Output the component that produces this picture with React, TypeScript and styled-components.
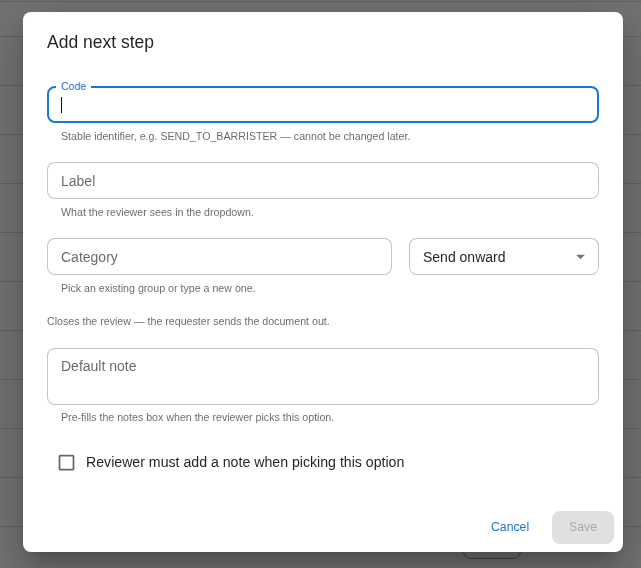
import React from "react";
import styled, { createGlobalStyle } from "styled-components";

const Global = createGlobalStyle`
  html, body { margin: 0; padding: 0; }
  body { font-family: "Liberation Sans", Arial, Helvetica, sans-serif; }
  *, *::before, *::after { box-sizing: border-box; }
`;

const Page = styled.div`
  height: 568px;
  overflow: hidden;
  background: #e4e4e4;
  padding-top: 1px;
`;

const BgRow = styled.div<{ $h: number }>`
  height: ${(p) => p.$h}px;
  border-top: 1px solid #c2c2c2;
  display: flex;
  justify-content: flex-end;
  padding-right: 120px;
`;

const BgButton = styled.div`
  width: 58px;
  height: 32px;
  border: 1px solid #888;
  border-radius: 8px;
`;

const Overlay = styled.div`
  position: fixed;
  inset: 0;
  background: rgba(0, 0, 0, 0.5);
  display: flex;
  align-items: flex-start;
  padding: 12px 0 0 23px;
`;

const Dialog = styled.div`
  width: 600px;
  background: #fff;
  border-radius: 8px;
  display: flex;
  flex-direction: column;
  box-shadow: 0px 11px 15px -7px rgba(0, 0, 0, 0.2),
    0px 24px 38px 3px rgba(0, 0, 0, 0.14), 0px 9px 46px 8px rgba(0, 0, 0, 0.12);
`;

const Title = styled.h2`
  margin: 0;
  padding: 16px 24px 0;
  font-size: 17.5px;
  font-weight: 500;
  line-height: 28px;
  color: rgba(0, 0, 0, 0.87);
`;

const Content = styled.div`
  padding: 30px 24px 21px;
  display: flex;
  flex-direction: column;
  gap: 16px;
`;

const FieldGroup = styled.div`
  display: flex;
  flex-direction: column;
  min-width: 0;
`;

const Outline = styled.div<{ $focused?: boolean }>`
  position: relative;
  display: flex;
  align-items: flex-start;
  border: ${(p) =>
    p.$focused ? "2px solid #1976d2" : "1px solid rgba(0, 0, 0, 0.23)"};
  border-radius: 8px;
  padding: ${(p) => (p.$focused ? "6.5px 12px" : "7.5px 13px")};
  background: #fff;
`;

const FloatLabel = styled.span`
  position: absolute;
  top: -8px;
  left: 7px;
  padding: 0 5px;
  background: #fff;
  font-size: 10.5px;
  line-height: 12px;
  color: #1976d2;
`;

const FakeInput = styled.div`
  height: 20.125px;
  display: flex;
  align-items: center;
`;

const Caret = styled.span`
  display: block;
  width: 1px;
  height: 16px;
  background: #111;
`;

const Input = styled.input`
  border: none;
  outline: none;
  padding: 0;
  margin: 0;
  width: 100%;
  height: 20.125px;
  font: inherit;
  font-size: 14px;
  line-height: 20.125px;
  color: rgba(0, 0, 0, 0.87);
  background: transparent;
  &::placeholder {
    color: rgba(0, 0, 0, 0.6);
    opacity: 1;
  }
`;

const TextArea = styled.textarea`
  border: none;
  outline: none;
  padding: 0;
  margin: 0;
  width: 100%;
  height: 40.25px;
  resize: none;
  font: inherit;
  font-size: 14px;
  line-height: 20.125px;
  color: rgba(0, 0, 0, 0.87);
  background: transparent;
  overflow: hidden;
  &::placeholder {
    color: rgba(0, 0, 0, 0.6);
    opacity: 1;
  }
`;

const Helper = styled.p`
  margin: 4.5px 14px 1px;
  font-size: 10.65px;
  line-height: 17.43px;
  color: rgba(0, 0, 0, 0.6);
`;

const Note = styled.p`
  margin: -1px 0 1px;
  font-size: 10.65px;
  line-height: 17.43px;
  color: rgba(0, 0, 0, 0.6);
`;

const TwoCols = styled.div`
  display: grid;
  grid-template-columns: 1fr 190px;
  gap: 17px;
  align-items: start;
`;

const SelectValue = styled.span`
  font-size: 14px;
  line-height: 20.125px;
  color: rgba(0, 0, 0, 0.87);
`;

const SelectArrow = styled.svg`
  position: absolute;
  right: 7px;
  top: 50%;
  margin-top: -10.5px;
  width: 21px;
  height: 21px;
  fill: rgba(0, 0, 0, 0.54);
`;

const CheckRow = styled.label`
  display: flex;
  align-items: center;
  margin-top: -1px;
`;

const CheckBoxWrap = styled.span`
  display: flex;
  padding: 9px;
  svg {
    width: 21px;
    height: 21px;
    fill: rgba(0, 0, 0, 0.6);
  }
`;

const CheckText = styled.span`
  font-size: 14.15px;
  line-height: 1.5;
  color: rgba(0, 0, 0, 0.87);
`;

const Actions = styled.div`
  display: flex;
  justify-content: flex-end;
  align-items: center;
  gap: 14px;
  padding: 8px 9px 8px 8px;
`;

const BaseButton = styled.button`
  font-family: inherit;
  font-size: 12.25px;
  font-weight: 500;
  line-height: 1.75;
  border: none;
  border-radius: 8px;
  min-width: 56px;
  cursor: pointer;
`;

const TextButton = styled(BaseButton)`
  background: transparent;
  color: #1976d2;
  padding: 6px 8px;
`;

const SaveButton = styled(BaseButton)`
  background: rgba(0, 0, 0, 0.12);
  color: rgba(0, 0, 0, 0.26);
  padding: 6px 17px;
  cursor: default;
`;

const bgRows = Array.from({ length: 11 });

export default function App() {
  return (
    <>
      <Global />
      <Page>
        <BgRow $h={35} />
        {bgRows.map((_, i) => (
          <BgRow key={i} $h={49}>
            {i === bgRows.length - 1 && <BgButton />}
          </BgRow>
        ))}
      </Page>
      <Overlay>
        <Dialog role="dialog" aria-labelledby="dlg-title">
          <Title id="dlg-title">Add next step</Title>
          <Content>
            <FieldGroup>
              <Outline $focused>
                <FloatLabel>Code</FloatLabel>
                <FakeInput>
                  <Caret />
                </FakeInput>
              </Outline>
              <Helper>
                Stable identifier, e.g. SEND_TO_BARRISTER — cannot be changed
                later.
              </Helper>
            </FieldGroup>

            <FieldGroup>
              <Outline>
                <Input placeholder="Label" />
              </Outline>
              <Helper>What the reviewer sees in the dropdown.</Helper>
            </FieldGroup>

            <TwoCols>
              <FieldGroup>
                <Outline>
                  <Input placeholder="Category" />
                </Outline>
                <Helper>Pick an existing group or type a new one.</Helper>
              </FieldGroup>
              <Outline>
                <SelectValue>Send onward</SelectValue>
                <SelectArrow viewBox="0 0 24 24">
                  <path d="M7 10l5 5 5-5z" />
                </SelectArrow>
              </Outline>
            </TwoCols>

            <Note>Closes the review — the requester sends the document out.</Note>

            <FieldGroup>
              <Outline>
                <TextArea rows={2} placeholder="Default note" />
              </Outline>
              <Helper>Pre-fills the notes box when the reviewer picks this option.</Helper>
            </FieldGroup>

            <CheckRow>
              <CheckBoxWrap>
                <svg viewBox="0 0 24 24">
                  <path d="M19 5v14H5V5h14m0-2H5c-1.1 0-2 .9-2 2v14c0 1.1.9 2 2 2h14c1.1 0 2-.9 2-2V5c0-1.1-.9-2-2-2z" />
                </svg>
              </CheckBoxWrap>
              <CheckText>Reviewer must add a note when picking this option</CheckText>
            </CheckRow>
          </Content>
          <Actions>
            <TextButton>Cancel</TextButton>
            <SaveButton disabled>Save</SaveButton>
          </Actions>
        </Dialog>
      </Overlay>
    </>
  );
}
